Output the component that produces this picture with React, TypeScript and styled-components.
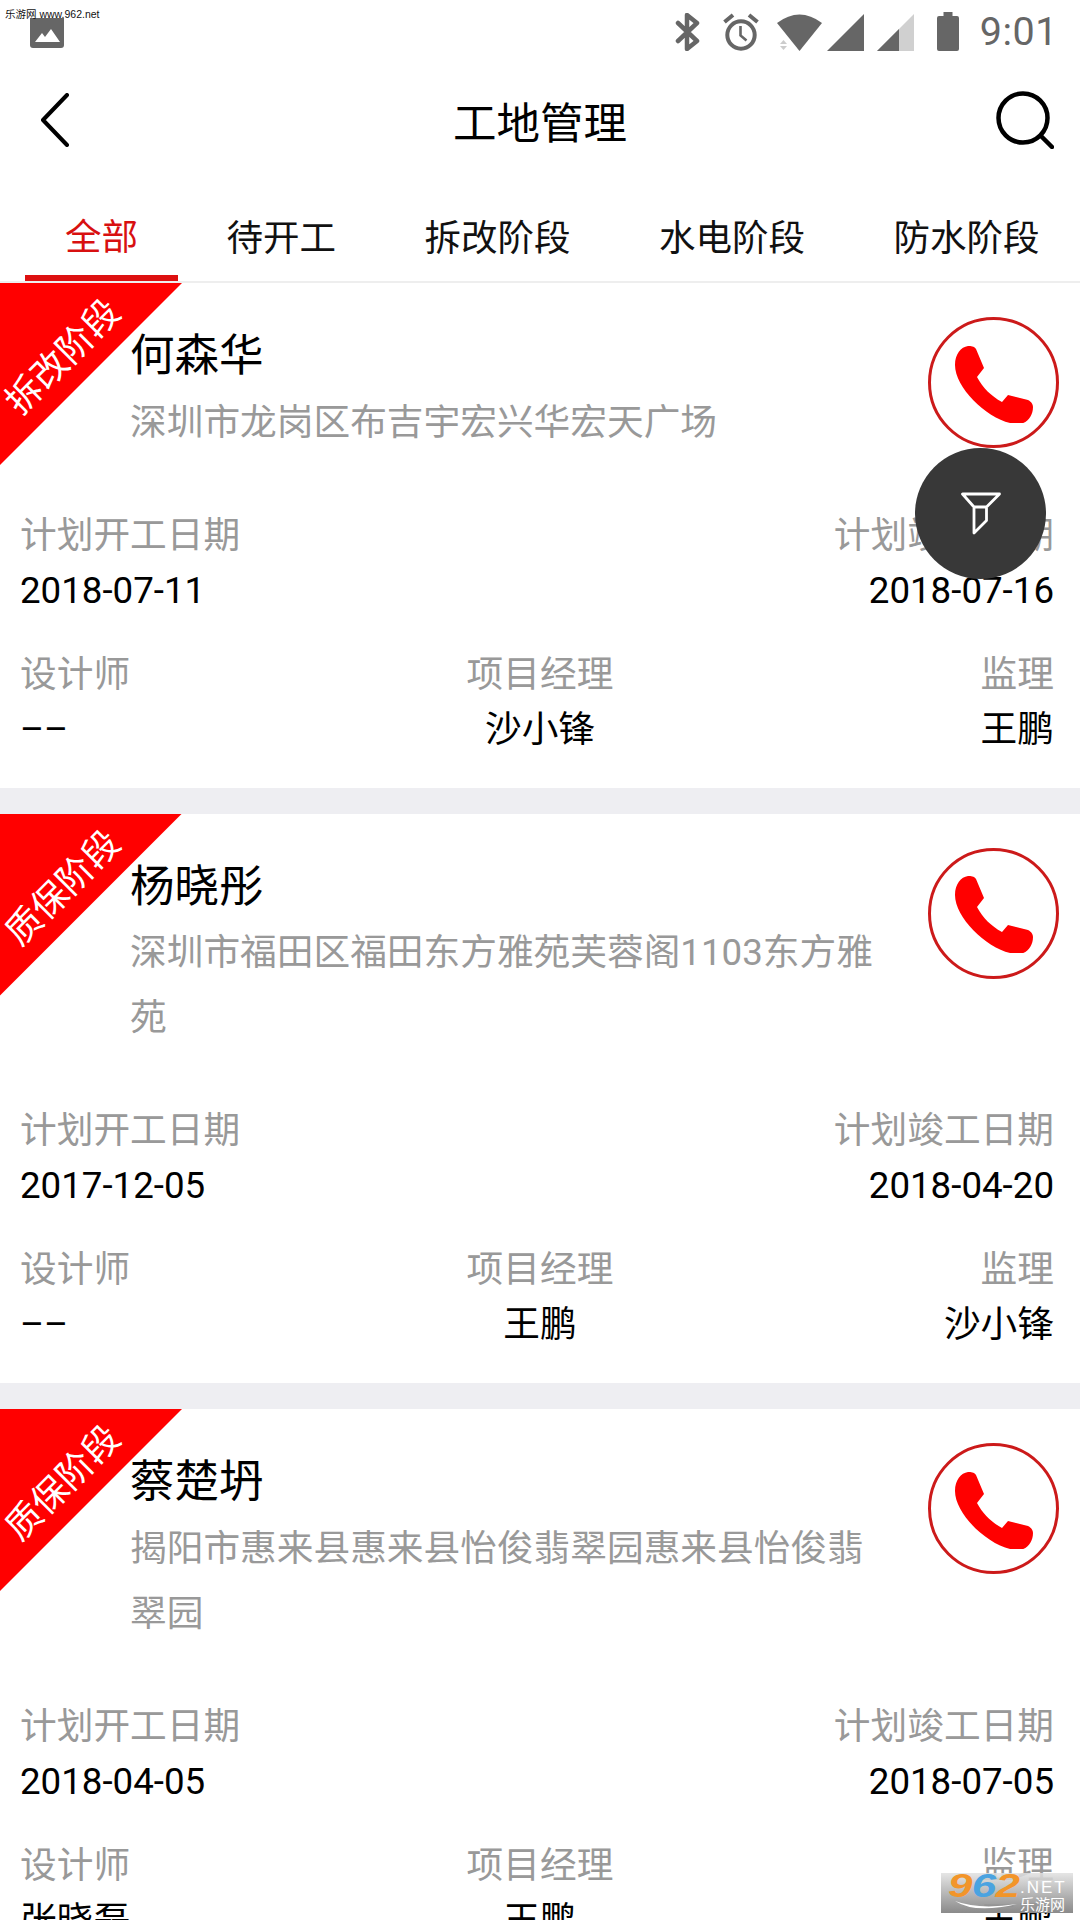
import styled, { createGlobalStyle } from "styled-components"

const GlobalStyle = createGlobalStyle`
html,body{margin:0;padding:0;background:#fff;}
body{font-family:Roboto,"Noto Sans CJK SC",sans-serif;}
#root{width:1080px;height:1920px;overflow:hidden;position:relative;}
`

interface SiteType {
  stage: string;
  name: string;
  address: string;
  start: string;
  end: string;
  designer: string;
  manager: string;
  supervisor: string;
}

const sites: SiteType[] = [
  { stage: "拆改阶段", name: "何森华", address: "深圳市龙岗区布吉宇宏兴华宏天广场", start: "2018-07-11", end: "2018-07-16", designer: "––", manager: "沙小锋", supervisor: "王鹏" },
  { stage: "质保阶段", name: "杨晓彤", address: "深圳市福田区福田东方雅苑芙蓉阁1103东方雅苑", start: "2017-12-05", end: "2018-04-20", designer: "––", manager: "王鹏", supervisor: "沙小锋" },
  { stage: "质保阶段", name: "蔡楚坍", address: "揭阳市惠来县惠来县怡俊翡翠园惠来县怡俊翡翠园", start: "2018-04-05", end: "2018-07-05", designer: "张晓磊", manager: "王鹏", supervisor: "王鹏" },
]

const tabs = ["全部", "待开工", "拆改阶段", "水电阶段", "防水阶段"]

function App() {
  return (
    <Page>
      <GlobalStyle />
      <StatusBar>
        <Watermark>乐游网 www.962.net</Watermark>
        <svg width="34" height="30" viewBox="0 0 34 30"><path d="M0 0h34v27a3 3 0 0 1-3 3H3a3 3 0 0 1-3-3z" fill="#666" /><path d="M5 24l7-9 3 4 6-8 9 13z" fill="#fff" /></svg>
        <StatusRight>
          <StatusIcon $gap={23}>
            <svg width="25" height="38" viewBox="0 0 25 38"><path d="M3 10l19 18-10 8V2l10 8L3 28" fill="none" stroke="#666" strokeWidth="4.5" strokeLinecap="round" strokeLinejoin="round" /></svg>
          </StatusIcon>
          <StatusIcon $gap={18}>
            <svg width="36" height="38" viewBox="0 0 36 38"><circle cx="18" cy="22" r="13.7" fill="none" stroke="#666" strokeWidth="4" /><path d="M17.5 13v9.5l6 5" fill="none" stroke="#666" strokeWidth="2.6" /><path d="M1.5 9L10 2M34.500 9L26 2" stroke="#666" strokeWidth="4" /></svg>
          </StatusIcon>
          <StatusIcon $gap={5}>
            <svg width="45" height="37" viewBox="0 0 45 37"><path d="M0 9Q22.500-8 45 9L22.500 37z" fill="#666" /><path d="M3 30l3.500-4 3.500 4zM3 32h7l-3.500 4z" fill="#ccc" /></svg>
          </StatusIcon>
          <StatusIcon $gap={13}>
            <svg width="37" height="37" viewBox="0 0 37 37"><path d="M37 0v37H0z" fill="#666" /></svg>
          </StatusIcon>
          <StatusIcon $gap={23}>
            <svg width="37" height="37" viewBox="0 0 37 37"><path d="M37 0v37H0z" fill="#d0d0d0" /><path d="M22 15v22H0z" fill="#666" /></svg>
          </StatusIcon>
          <StatusIcon $gap={21}>
            <svg width="22" height="39" viewBox="0 0 22 39"><path d="M6.500 0h9v4H20a2 2 0 0 1 2 2v31a2 2 0 0 1-2 2H2a2 2 0 0 1-2-2V6a2 2 0 0 1 2-2h4.500z" fill="#666" /></svg>
          </StatusIcon>
          <Clock>9:01</Clock>
        </StatusRight>
      </StatusBar>
      <TitleBar>
        <BackIcon width="30" height="54" viewBox="0 0 30 54"><path d="M27 2L3 27l24 25" fill="none" stroke="#000" strokeWidth="4" strokeLinecap="round" strokeLinejoin="round" /></BackIcon>
        <Title>工地管理</Title>
        <SearchIcon width="58" height="58" viewBox="0 0 58 58"><circle cx="27" cy="27" r="24.500" fill="none" stroke="#000" strokeWidth="4.500" /><path d="M45 45l11 11" stroke="#000" strokeWidth="4.500" strokeLinecap="round" /></SearchIcon>
      </TitleBar>
      <TabBar>
        {tabs.map((tab, i) => (
          <Tab key={tab} $active={i === 0}>{tab}</Tab>
        ))}
      </TabBar>
      {sites.map((site) => (
        <Card key={site.name}>
          <Ribbon><RibbonText>{site.stage}</RibbonText></Ribbon>
          <Head>
            <HeadText>
              <Name>{site.name}</Name>
              <Address>{site.address}</Address>
            </HeadText>
            <CallButton>
              <svg width="80" height="80" viewBox="-1 -3 80 80"><path d="M13 0C16 0 19 0 21 3L29 22 22 31C28 42 36 50 47 56L53 49 73 54C77 56 78 59 78 61 78 70 72 78 63 78 38 78 0 44 0 19 0 8 6 1 13 0z" fill="#f00" /></svg>
            </CallButton>
          </Head>
          <DateRow>
            <Cell><Label>计划开工日期</Label><Value>{site.start}</Value></Cell>
            <Cell $align="right"><Label>计划竣工日期</Label><Value>{site.end}</Value></Cell>
          </DateRow>
          <PeopleRow>
            <Cell><Label>设计师</Label><Value>{site.designer}</Value></Cell>
            <MiddleCell $align="center"><Label>项目经理</Label><Value>{site.manager}</Value></MiddleCell>
            <Cell $align="right"><Label>监理</Label><Value>{site.supervisor}</Value></Cell>
          </PeopleRow>
        </Card>
      ))}
      <Fab>
        <svg width="40" height="43" viewBox="0 0 40 43"><path d="M1.500 2h37L25.500 15v13.500L13 41V15zM13 15h12.500" fill="none" stroke="#fff" strokeWidth="2.800" strokeLinejoin="round" /></svg>
      </Fab>
      <Badge>
        <BadgeNum><span>9</span><BlueDigit>6</BlueDigit><span>2</span></BadgeNum>
        <BadgeSide><BadgeNet>.NET</BadgeNet><span>乐游网</span></BadgeSide>
        <BadgeSwoosh width="62" height="12" viewBox="0 0 62 12"><path d="M0 1Q20 14 62 4Q24 10 0 1z" fill="#fff" /></BadgeSwoosh>
      </Badge>
    </Page>
  )
}

const Page = styled.div`
width:1080px;
`
const StatusBar = styled.div`
height:57px;
padding:18px 22px 0 30px;
box-sizing:border-box;
display:flex;
justify-content:space-between;
align-items:flex-start;
`
const Watermark = styled.div`
position:absolute;
left:5px;
top:6px;
font-size:10.5px;
font-family:"Liberation Sans","Noto Sans CJK SC",sans-serif;
color:#111;
`
const StatusRight = styled.div`
display:flex;
align-items:flex-end;
margin-top:-6px;
height:39px;
`
const StatusIcon = styled.div<{ $gap: number }>`
display:flex;
margin-right:${(p) => p.$gap}px;
`
const Clock = styled.div`
font-size:39.500px;
color:#666;
line-height:38px;
letter-spacing:.5px;
`
const TitleBar = styled.div`
height:130px;
padding:0 26px 4px;
box-sizing:border-box;
display:grid;
grid-template-columns:1fr auto 1fr;
align-items:center;
`
const BackIcon = styled.svg`
margin-left:14px;
`
const SearchIcon = styled.svg`
justify-self:end;
`
const Title = styled.div`
font-size:43.500px;
color:#000;
`
const TabBar = styled.div`
height:96px;
box-sizing:border-box;
padding-left:25px;
display:flex;
gap:8.500px;
border-bottom:2px solid #eee;
`
const Tab = styled.div<{ $active?: boolean }>`
padding:${(p) => (p.$active ? "25.600px" : "27.300px")} 40px 0;
height:94px;
line-height:50px;
font-size:36.500px;
color:${(p) => (p.$active ? "#d81010" : "#111")};
box-sizing:border-box;
border-bottom:${(p) => (p.$active ? "6px solid #dd1010" : "none")};
white-space:nowrap;
`
const Card = styled.div`
position:relative;
padding:43px 26px 33px 20px;
border-bottom:26px solid #eeeef2;
`
const Ribbon = styled.div`
position:absolute;
left:0;
top:0;
width:182px;
height:182px;
background:#f00;
clip-path:polygon(0 0,100% 0,0 100%);
`
const RibbonText = styled.div`
position:absolute;
left:-10px;
top:49px;
width:146px;
text-align:center;
color:#fff;
font-size:36px;
line-height:50px;
white-space:nowrap;
transform:rotate(-45deg);
`
const Head = styled.div`
display:flex;
padding-left:110px;
justify-content:space-between;
align-items:flex-start;
`
const HeadText = styled.div`
width:750px;
`
const Name = styled.div`
font-size:44.500px;
line-height:60px;
color:#000;
`
const Address = styled.div`
font-size:36.700px;
line-height:65px;
margin-top:3.500px;
color:#999;
`
const CallButton = styled.div`
flex:none;
width:131px;
height:131px;
margin-top:-9px;
margin-right:-5px;
box-sizing:border-box;
border:3px solid #cc1a1a;
border-radius:50%;
display:flex;
align-items:center;
justify-content:center;
`
const DateRow = styled.div`
display:flex;
justify-content:space-between;
margin-top:56px;
`
const PeopleRow = styled.div`
display:grid;
grid-template-columns:1fr auto 1fr;
margin-top:34px;
`
const Cell = styled.div<{ $align?: string }>`
text-align:${(p) => p.$align || "left"};
`
const MiddleCell = styled(Cell)`
padding-left:6px;
`
const Label = styled.div`
font-size:36.700px;
line-height:50px;
color:#999;
`
const Value = styled.div`
font-size:36.700px;
line-height:50px;
margin-top:5px;
color:#000;
`
const Fab = styled.div`
position:absolute;
left:915px;
top:448px;
width:131px;
height:131px;
border-radius:50%;
background:#383838;
display:flex;
align-items:center;
justify-content:center;
`
const Badge = styled.div`
position:absolute;
left:941px;
top:1873px;
width:132px;
height:40px;
background:linear-gradient(rgba(225,225,225,.85),#8a8a8a);
display:flex;
align-items:flex-start;
padding-left:7px;
box-sizing:border-box;
`
const BadgeNum = styled.div`
font-family:"Liberation Sans",sans-serif;
font-weight:700;
font-style:italic;
font-size:33px;
line-height:26px;
letter-spacing:-.5px;
color:#f2952a;
width:72px;
flex:none;
white-space:nowrap;
transform:scaleX(1.33);
transform-origin:left center;
`
const BlueDigit = styled.span`
color:#4aa3e0;
`
const BadgeSide = styled.div`
display:flex;
flex-direction:column;
font-size:15px;
line-height:17px;
color:#fff;
padding-top:5px;
white-space:nowrap;
`
const BadgeNet = styled.span`
font-family:"Liberation Sans",sans-serif;
font-size:17px;
line-height:19px;
letter-spacing:2px;
`
const BadgeSwoosh = styled.svg`
position:absolute;
left:14px;
top:27px;
`

export default App
